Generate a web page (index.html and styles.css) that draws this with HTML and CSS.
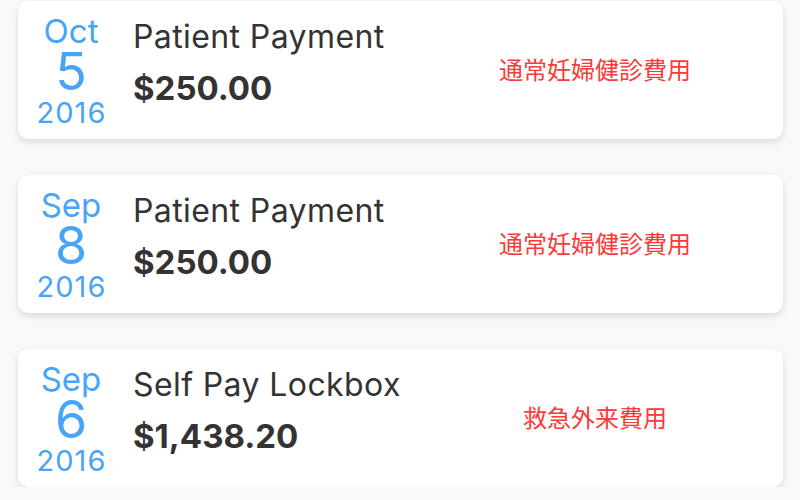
FILE: index.html
```html
<!DOCTYPE html>
<html lang="ja">
<head>
<meta charset="utf-8">
<title>Payments</title>
<link rel="stylesheet" href="styles.css">
</head>
<body>
<div class="list">
  <div class="card">
    <div class="date">
      <div class="month">Oct</div>
      <div class="day">5</div>
      <div class="year">2016</div>
    </div>
    <div class="info">
      <div class="title">Patient Payment</div>
      <div class="amount">$250.00</div>
    </div>
    <div class="note">通常妊婦健診費用</div>
  </div>
  <div class="card">
    <div class="date">
      <div class="month">Sep</div>
      <div class="day">8</div>
      <div class="year">2016</div>
    </div>
    <div class="info">
      <div class="title">Patient Payment</div>
      <div class="amount">$250.00</div>
    </div>
    <div class="note">通常妊婦健診費用</div>
  </div>
  <div class="card">
    <div class="date">
      <div class="month">Sep</div>
      <div class="day">6</div>
      <div class="year">2016</div>
    </div>
    <div class="info">
      <div class="title">Self Pay Lockbox</div>
      <div class="amount">$1,438.20</div>
    </div>
    <div class="note">救急外来費用</div>
  </div>
</div>
</body>
</html>
```
FILE: styles.css
```css
html, body {
  margin: 0;
  padding: 0;
  background: #f9f9f9;
  font-family: "Inter", "Liberation Sans", "Noto Sans CJK JP", sans-serif;
}
.list {
  display: flex;
  flex-direction: column;
  gap: 36px;
  padding: 1px 17px 0 18px;
}
.card {
  height: 138px;
  background: #ffffff;
  border-radius: 10px;
  box-shadow: 0 3px 7px rgba(0, 0, 0, 0.13);
  display: flex;
  align-items: stretch;
  box-sizing: border-box;
}
.date {
  width: 106px;
  display: flex;
  flex-direction: column;
  align-items: center;
  color: #47a4f6;
  padding-top: 14px;
}
.month {
  font-size: 33px;
  line-height: 33px;
}
.day {
  font-size: 52px;
  line-height: 48px;
}
.year {
  font-size: 29px;
  letter-spacing: 1px;
  line-height: 30px;
  margin-top: 2px;
  padding-left: 1px;
}
.info {
  flex: 1;
  padding-left: 9px;
  padding-top: 16px;
  color: #333333;
}
.title {
  font-size: 32px;
  letter-spacing: 0.4px;
  line-height: 40px;
}
.amount {
  font-size: 33px;
  font-weight: 700;
  line-height: 40px;
  margin-top: 11px;
}
.note {
  width: 376px;
  display: flex;
  align-items: center;
  justify-content: center;
  color: #fb3a3a;
  font-family: "Noto Sans CJK JP", sans-serif;
  font-size: 24px;
  padding-bottom: 4px;
}
```
